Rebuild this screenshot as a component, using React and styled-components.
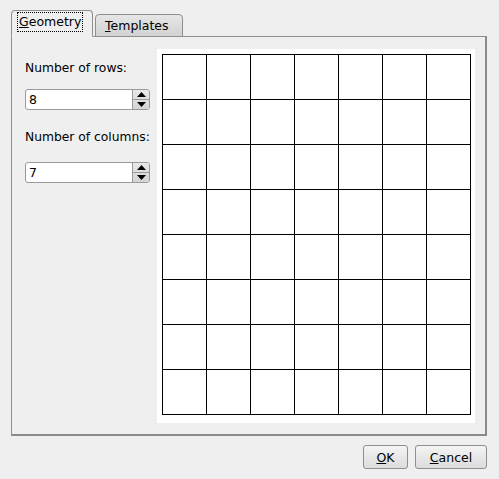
import React from 'react';
import styled, { createGlobalStyle } from 'styled-components';

const GlobalStyle = createGlobalStyle`
  html, body {
    margin: 0;
    padding: 0;
    background: #efefef;
  }
  body {
    font-family: "DejaVu Sans", "Liberation Sans", sans-serif;
    font-size: 12px;
    color: #000;
  }
`;

const Dialog = styled.div`
  width: 499px;
  height: 479px;
  box-sizing: border-box;
  padding: 10px 12px 0 11px;
  background: #efefef;
  display: flex;
  flex-direction: column;
`;

const TabBar = styled.div`
  display: flex;
  align-items: flex-end;
  height: 27px;
  position: relative;
  z-index: 1;
  margin-bottom: -1px;
`;

const Tab = styled.div`
  box-sizing: border-box;
  height: ${(p) => (p.$active ? '27px' : '23px')};
  padding: 0 0 0 ${(p) => (p.$active ? '5px' : '7px')};
  margin-left: ${(p) => (p.$active ? '0' : '2px')};
  display: flex;
  align-items: center;
  border: 1px solid #8f8f8f;
  border-bottom: ${(p) => (p.$active ? '1px solid #efefef' : '1px solid #8f8f8f')};
  border-radius: 4px 4px 0 0;
  background: ${(p) =>
    p.$active ? '#efefef' : 'linear-gradient(#e6e6e6, #d2d2d2)'};
  width: ${(p) => p.$w}px;
  white-space: nowrap;
`;

const TabLabel = styled.span`
  display: inline-block;
  padding: 1px 1px;
  margin-top: ${(p) => (p.$active ? '-3px' : '0')};
  border: 1px dotted ${(p) => (p.$active ? '#000' : 'transparent')};
  line-height: 16px;
  font-size: 12.5px;
`;

const Mnemonic = styled.span`
  text-decoration: underline;
`;

const Pane = styled.div`
  box-sizing: border-box;
  width: 476px;
  height: 400px;
  border: 1px solid #8f8f8f;
  border-right: 2px solid #8a8a8a;
  border-bottom: 2px solid #8a8a8a;
  padding: 12px 0 0 13px;
  display: flex;
  gap: 7px;
`;

const SettingsColumn = styled.div`
  width: 125px;
  display: flex;
  flex-direction: column;
  padding-top: 11px;
`;

const FieldLabel = styled.div`
  height: 16px;
  line-height: 16px;
  font-size: 12.3px;
  white-space: nowrap;
  margin-bottom: ${(p) => p.$mb}px;
`;

const SpinBox = styled.div`
  box-sizing: border-box;
  height: 21px;
  display: flex;
  border: 1px solid #9a9a9a;
  border-radius: 3px;
  background: #fff;
  margin-bottom: ${(p) => p.$mb || 0}px;
  overflow: hidden;
`;

const SpinValue = styled.div`
  flex: 1;
  padding-left: 3px;
  line-height: 19px;
  font-size: 12.5px;
`;

const SpinButtons = styled.div`
  width: 16px;
  display: flex;
  flex-direction: column;
  border-left: 1px solid #9a9a9a;
  background: linear-gradient(#e8e8e8, #d4d4d4);
`;

const SpinButton = styled.div`
  flex: 1;
  display: flex;
  align-items: center;
  justify-content: center;
  & + & {
    border-top: 1px solid #9a9a9a;
  }
`;

const Canvas = styled.div`
  box-sizing: border-box;
  width: 318px;
  height: 374px;
  background: #fff;
  padding: 5px;
`;

const Grid = styled.div`
  display: grid;
  grid-template-columns: repeat(${(p) => p.$cols}, 44px);
  grid-template-rows: repeat(${(p) => p.$rows}, 45px);
  border-left: 1px solid #000;
  border-top: 1px solid #000;
  width: max-content;
`;

const Cell = styled.div`
  border-right: 1px solid #000;
  border-bottom: 1px solid #000;
  box-sizing: border-box;
`;

const ButtonRow = styled.div`
  display: flex;
  justify-content: flex-end;
  gap: 7px;
  margin-top: 9px;
  width: 476px;
`;

const PushButton = styled.button`
  box-sizing: border-box;
  height: 24px;
  width: ${(p) => p.$w}px;
  font-family: "DejaVu Sans", "Liberation Sans", sans-serif;
  font-size: 12.5px;
  color: #000;
  border: 1px solid #8f8f8f;
  border-radius: 3px;
  background: linear-gradient(#f4f4f4, #dcdcdc);
  padding: 0;
`;

const Arrow = ({ up }) => (
  <svg width="9" height="5" viewBox="0 0 9 5">
    <polygon points={up ? '4.5,0 9,5 0,5' : '0,0 9,0 4.5,5'} fill="#000" />
  </svg>
);

const Spin = ({ value, mb }) => (
  <SpinBox $mb={mb}>
    <SpinValue>{value}</SpinValue>
    <SpinButtons>
      <SpinButton><Arrow up /></SpinButton>
      <SpinButton><Arrow /></SpinButton>
    </SpinButtons>
  </SpinBox>
);

export default function App() {
  const rows = 8;
  const cols = 7;
  const cells = Array.from({ length: rows * cols });

  return (
    <>
      <GlobalStyle />
      <Dialog>
        <TabBar>
          <Tab $active $w={82}>
            <TabLabel $active><Mnemonic>G</Mnemonic>eometry</TabLabel>
          </Tab>
          <Tab $w={88}>
            <TabLabel><Mnemonic>T</Mnemonic>emplates</TabLabel>
          </Tab>
        </TabBar>
        <Pane>
          <SettingsColumn>
            <FieldLabel $mb={13}>Number of rows:</FieldLabel>
            <Spin value="8" mb={19} />
            <FieldLabel $mb={17}>Number of columns:</FieldLabel>
            <Spin value="7" />
          </SettingsColumn>
          <Canvas>
            <Grid $rows={rows} $cols={cols}>
              {cells.map((_, i) => (
                <Cell key={i} />
              ))}
            </Grid>
          </Canvas>
        </Pane>
        <ButtonRow>
          <PushButton $w={45}><Mnemonic>O</Mnemonic>K</PushButton>
          <PushButton $w={72}><Mnemonic>C</Mnemonic>ancel</PushButton>
        </ButtonRow>
      </Dialog>
    </>
  );
}
